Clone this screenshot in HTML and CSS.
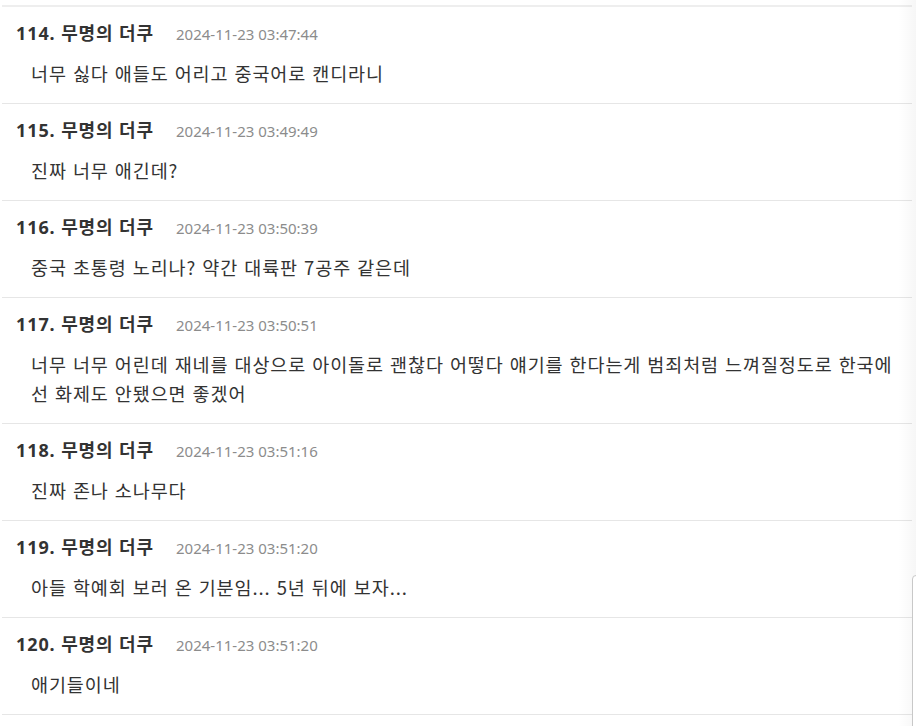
FILE: index.html
```html
<!DOCTYPE html>
<html lang="ko">
<head>
<meta charset="utf-8">
<title>댓글</title>
<link rel="stylesheet" href="styles.css">
</head>
<body>
<div class="page">
  <ul class="comments">
    <li class="comment">
      <div class="meta"><span class="author">114. 무명의 더쿠</span><span class="date">2024-11-23 03:47:44</span></div>
      <p class="text">너무 싫다 애들도 어리고 중국어로 캔디라니</p>
    </li>
    <li class="comment">
      <div class="meta"><span class="author">115. 무명의 더쿠</span><span class="date">2024-11-23 03:49:49</span></div>
      <p class="text">진짜 너무 애긴데?</p>
    </li>
    <li class="comment">
      <div class="meta"><span class="author">116. 무명의 더쿠</span><span class="date">2024-11-23 03:50:39</span></div>
      <p class="text">중국 초통령 노리나? 약간 대륙판 7공주 같은데</p>
    </li>
    <li class="comment">
      <div class="meta"><span class="author">117. 무명의 더쿠</span><span class="date">2024-11-23 03:50:51</span></div>
      <p class="text">너무 너무 어린데 재네를 대상으로 아이돌로 괜찮다 어떻다 얘기를 한다는게 범죄처럼 느껴질정도로 한국에선 화제도 안됐으면 좋겠어</p>
    </li>
    <li class="comment">
      <div class="meta"><span class="author">118. 무명의 더쿠</span><span class="date">2024-11-23 03:51:16</span></div>
      <p class="text">진짜 존나 소나무다</p>
    </li>
    <li class="comment">
      <div class="meta"><span class="author">119. 무명의 더쿠</span><span class="date">2024-11-23 03:51:20</span></div>
      <p class="text">아들 학예회 보러 온 기분임... 5년 뒤에 보자...</p>
    </li>
    <li class="comment">
      <div class="meta"><span class="author">120. 무명의 더쿠</span><span class="date">2024-11-23 03:51:20</span></div>
      <p class="text">애기들이네</p>
    </li>
  </ul>
  <div class="edge-shade"></div>
  <div class="side-panel"></div>
</div>
</body>
</html>
```
FILE: styles.css
```css
html, body {
  margin: 0;
  padding: 0;
  background: #ffffff;
}
body {
  font-family: "Noto Sans", "Noto Sans CJK KR", sans-serif;
  color: #333333;
  overflow: hidden;
}
.page {
  position: relative;
  width: 916px;
  height: 726px;
  overflow: hidden;
}
.comments {
  list-style: none;
  margin: 5px 0 0 2px;
  padding: 0;
  width: 910px;
  border-top: 2px solid #eeeeee;
}
.comment {
  padding: 13px 0 15px 14px;
  border-bottom: 1px solid #e6e6e6;
}
.meta {
  display: flex;
  align-items: baseline;
  height: 26px;
  line-height: 26px;
}
.author {
  font-size: 18px;
  font-weight: 700;
  color: #333333;
  letter-spacing: 0.9px;
}
.date {
  margin-left: 22px;
  font-size: 15px;
  color: #8c8c8c;
}
.text {
  margin: 13px 0 0 0;
  padding: 0 14px 0 15px;
  font-family: "Noto Sans CJK KR", sans-serif;
  font-size: 18.5px;
  letter-spacing: 0.9px;
  line-height: 29px;
  color: #333333;
}
.edge-shade {
  position: absolute;
  top: 0;
  right: 0;
  width: 18px;
  height: 726px;
  background: linear-gradient(to right, rgba(0,0,0,0), rgba(0,0,0,0.035));
  pointer-events: none;
}
.side-panel {
  position: absolute;
  left: 912px;
  top: 575px;
  width: 20px;
  height: 200px;
  background: #ffffff;
  border: 1px solid #c8c8c8;
  border-top-left-radius: 4px;
}
```
